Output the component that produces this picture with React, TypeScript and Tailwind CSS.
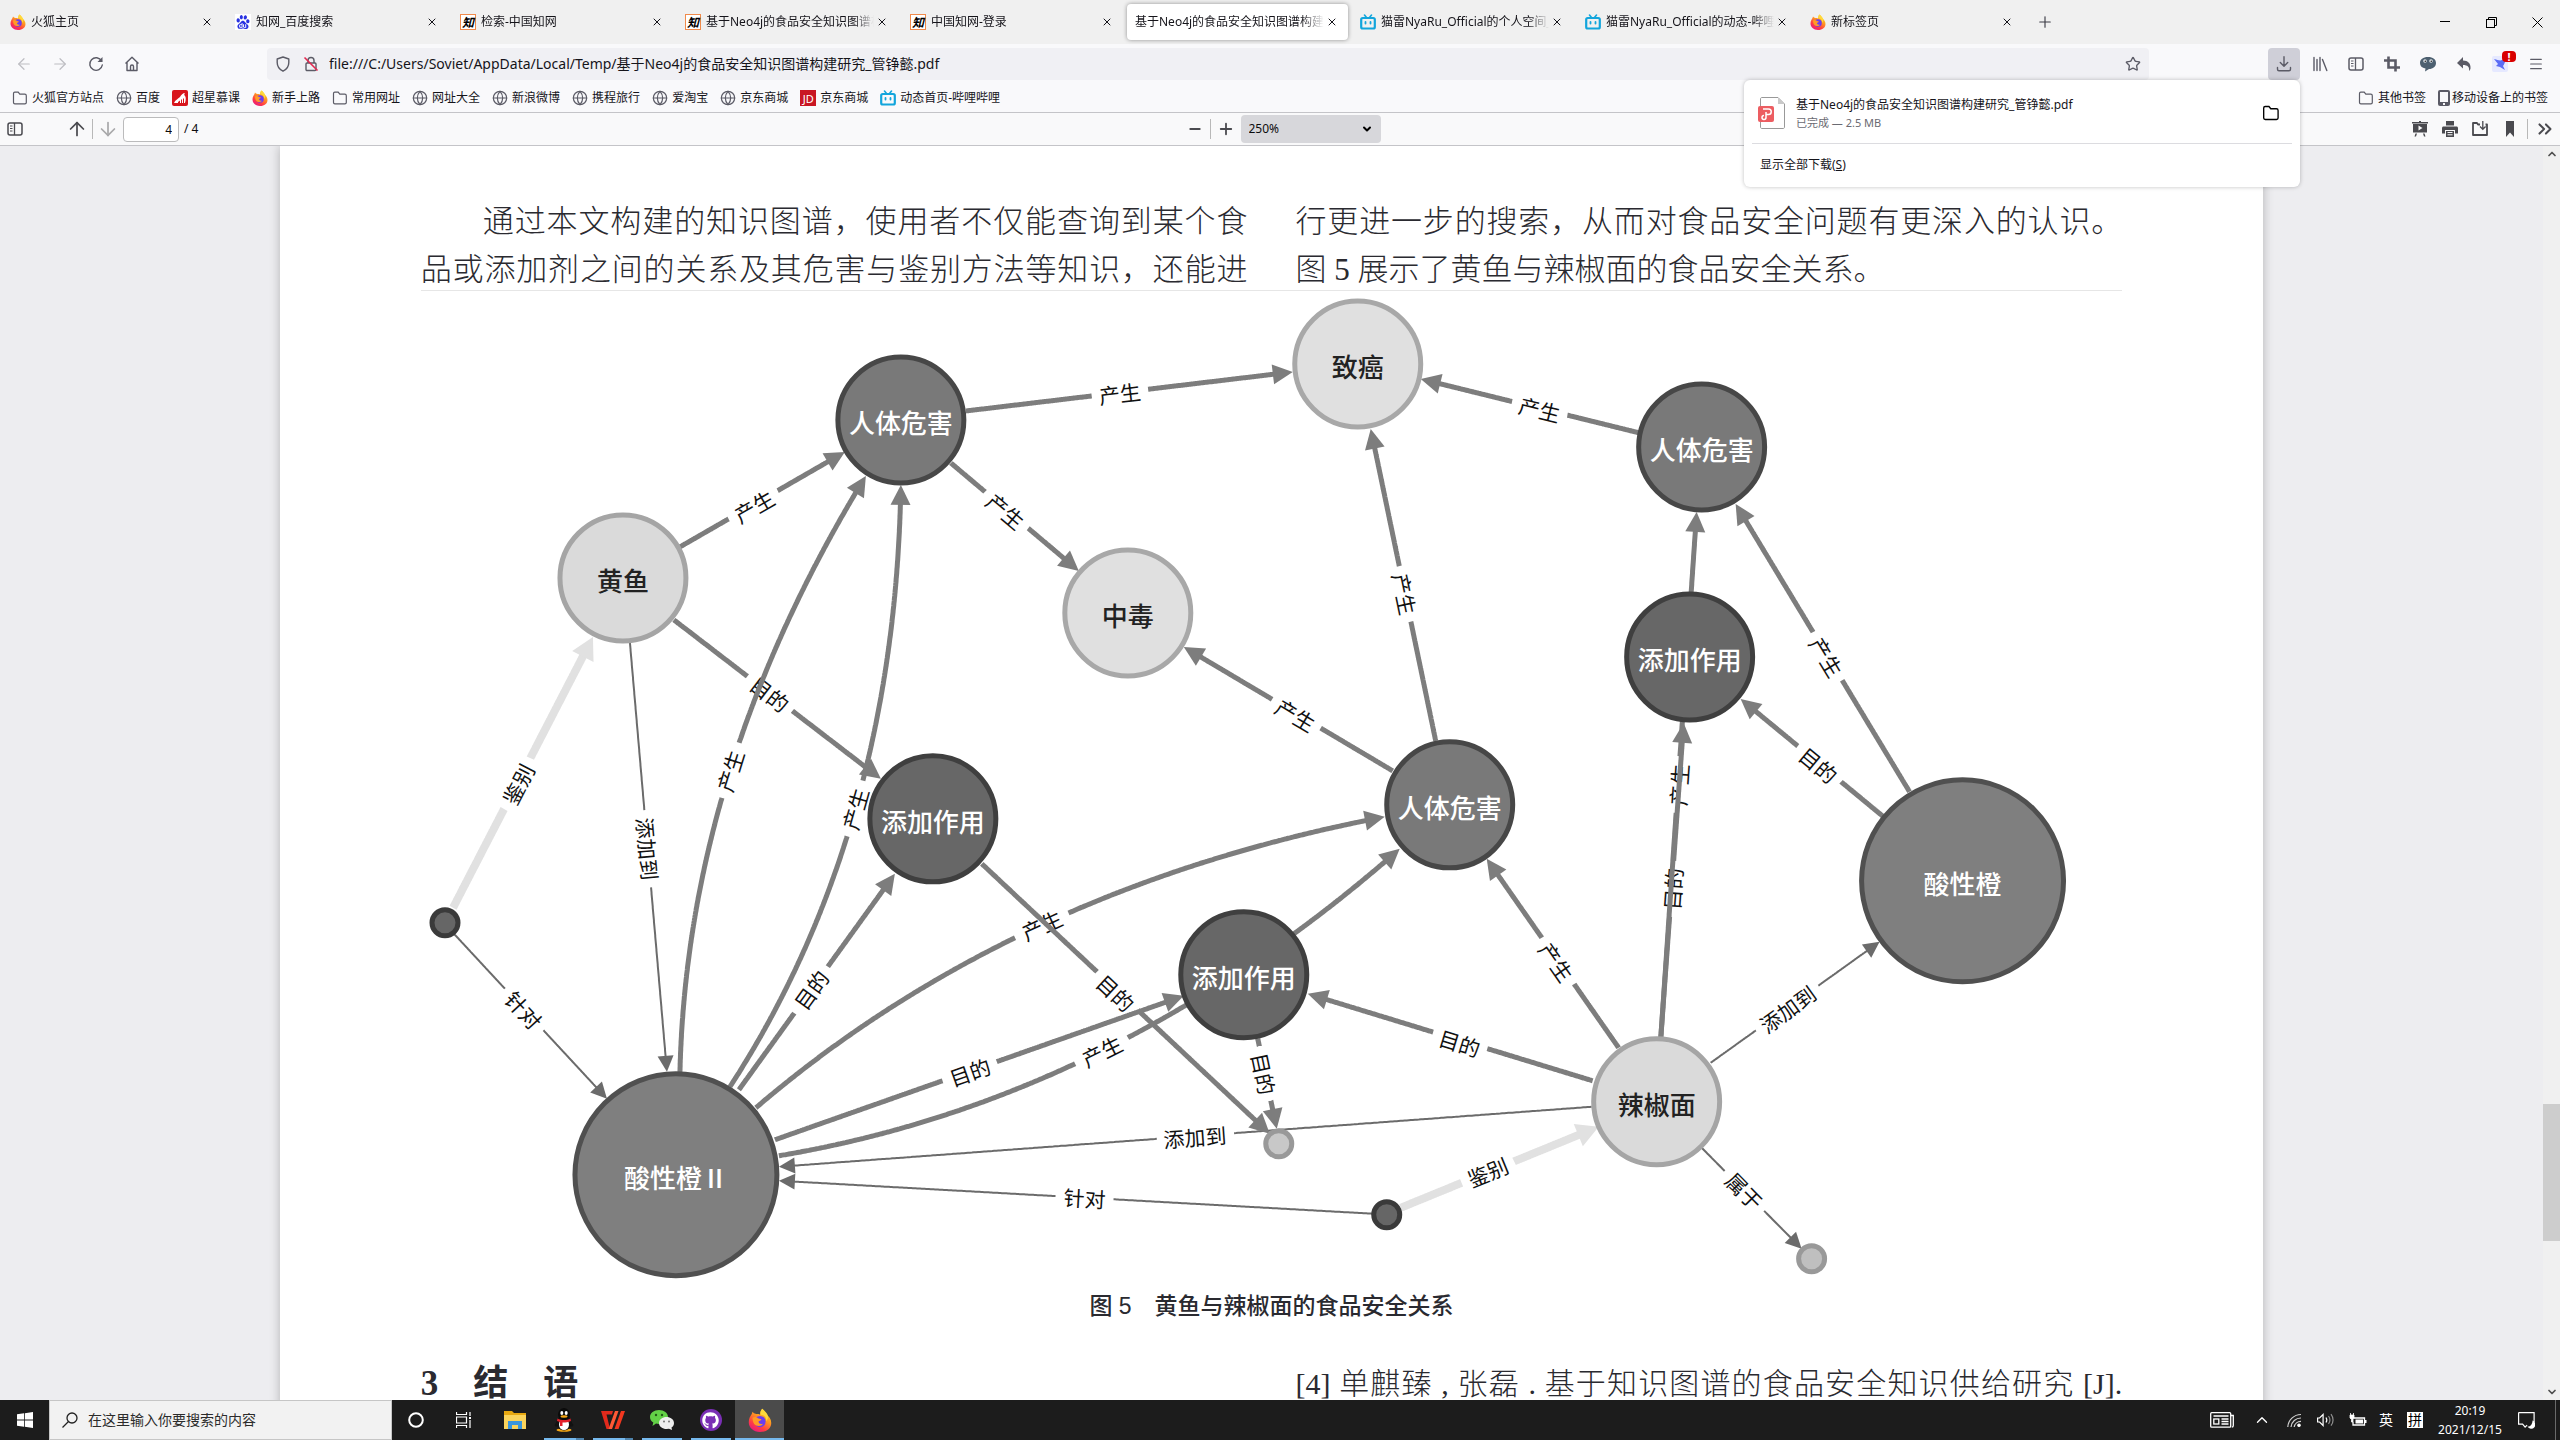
import type { ReactNode } from 'react';
import {
  ArrowDown,
  ArrowUp,
  ArrowLeft,
  ArrowRight,
  ChevronDown,
  ChevronUp,
  ChevronsRight,
  Globe,
  Menu,
  Minus,
  Plus,
  Star,
  X,
} from 'lucide-react';
import { FaGithub } from 'react-icons/fa';
import { SiBaidu } from 'react-icons/si';

/* ---------- logos ---------- */

function FirefoxLogo({ className = 'size-4' }: { className?: string }) {
  return (
    <svg viewBox="0 0 32 32" className={className} aria-hidden="true">
      <defs>
        <linearGradient id="ff-body" x1="0.8" y1="0" x2="0.2" y2="1">
          <stop offset="0" stopColor="#ffe226" />
          <stop offset="0.4" stopColor="#ff9422" />
          <stop offset="0.72" stopColor="#ff3b45" />
          <stop offset="1" stopColor="#e31587" />
        </linearGradient>
      </defs>
      <path
        d="M19 1c4 3 5 6 6 8 3 2 6 6 6 11 0 7-6 12-15 12S1 26 1 19c0-5 2-8 4-11l1-3 2 2 3 1c2 0 4 0 5 1 0-3 1-6 3-8z"
        fill="url(#ff-body)"
      />
      <circle cx="16" cy="18" r="7.5" fill="#6a3df0" />
      <path d="M6 13c3-2 6-1 8 1l4 1c-1 2-3 2-4 3 0 3 3 4 6 3-2 4-9 4-12 0-1-2-2-5-2-8z" fill="#ff9a26" />
      <path d="M17 9c5 0 8 4 7 9 4-4 3-9 0-12l-5-5c-2 2-3 5-2 8z" fill="#ffd93b" />
    </svg>
  );
}

function BiliLogo() {
  return (
    <svg viewBox="0 0 16 16" className="size-4" aria-hidden="true" fill="none" stroke="#12a5dc" strokeLinecap="round">
      <path d="M4.5 1l2 2.5M11.500 1l-2 2.500" strokeWidth="1.6" />
      <rect x="1.200" y="4" width="13.600" height="10.500" rx="1.500" strokeWidth="2.200" />
      <path d="M5.500 8v1.500M10.500 8v1.500" strokeWidth="1.800" />
    </svg>
  );
}

function CnkiLogo() {
  return (
    <span className="flex size-4 items-center justify-center border border-[#f08a4b] bg-white font-['Noto_Sans_CJK_SC',sans-serif] text-xs leading-none font-bold italic text-black">
      知
    </span>
  );
}

function BaiduLogo() {
  return (
    <span className="flex size-4 items-center justify-center bg-white">
      <SiBaidu className="size-3.5 text-[#2932e1]" />
    </span>
  );
}

function JdLogo() {
  return (
    <span className="flex size-4 items-center justify-center bg-[#c91623] text-[11px] leading-none text-white">JD</span>
  );
}

function ChaoxingLogo() {
  return (
    <svg viewBox="0 0 16 16" className="size-4" aria-hidden="true">
      <rect width="16" height="16" rx="2" fill="#d8151c" />
      <path d="M2 13c1-3 4-4 6-6 1-2 3-4 5-4-1 1-1 2 0 3s1 4 0 7h-1V9l-1-1v5h-1V9L9 10v3H8v-2.500L6 12v1z" fill="#fff" />
    </svg>
  );
}

/* ---------- outline icons ---------- */

function FolderIcon({ className = 'size-4 text-[#5b5b66]' }: { className?: string }) {
  return (
    <svg viewBox="0 0 16 16" className={className} fill="none" stroke="currentColor" strokeWidth="1.200" aria-hidden="true">
      <path d="M1.500 3.500c0-.8.500-1.300 1.300-1.300h3.400l1.600 2h5c.9 0 1.500.6 1.500 1.500v6.800c0 .8-.6 1.300-1.400 1.300H2.900c-.8 0-1.400-.5-1.400-1.300z" />
    </svg>
  );
}

function SidebarIcon({ className = 'size-4' }: { className?: string }) {
  return (
    <svg viewBox="0 0 16 16" className={className} fill="none" stroke="currentColor" aria-hidden="true">
      <rect x="1" y="2" width="14" height="12" rx="2" strokeWidth="1.500" />
      <path d="M7.500 2v12" strokeWidth="1.300" />
      <path d="M3 5h2.500M3 7.500h2.500M3 10h2.500" strokeWidth="1" />
    </svg>
  );
}

function PhoneIcon() {
  return (
    <svg viewBox="0 0 12 16" className="h-4 w-3" aria-hidden="true">
      <rect width="12" height="16" rx="2" fill="#5b5b66" />
      <rect x="2" y="2" width="8" height="10" fill="#f9f9fb" />
      <rect x="5" y="13" width="2" height="2" fill="#f9f9fb" />
    </svg>
  );
}

const strokeIcon = 'size-4 fill-none stroke-current';

/* ---------- browser chrome ---------- */

const tabs: { title: string; icon?: ReactNode; active?: boolean }[] = [
  { title: '火狐主页', icon: <FirefoxLogo /> },
  { title: '知网_百度搜索', icon: <BaiduLogo /> },
  { title: '检索-中国知网', icon: <CnkiLogo /> },
  { title: '基于Neo4j的食品安全知识图谱构建研究', icon: <CnkiLogo /> },
  { title: '中国知网-登录', icon: <CnkiLogo /> },
  { title: '基于Neo4j的食品安全知识图谱构建研究', active: true },
  { title: '猫雷NyaRu_Official的个人空间_哔哩哔哩', icon: <BiliLogo /> },
  { title: '猫雷NyaRu_Official的动态-哔哩哔哩', icon: <BiliLogo /> },
  { title: '新标签页', icon: <FirefoxLogo /> },
];

function TabStrip() {
  return (
    <header className="flex h-11 shrink-0 bg-[#f0f0f0]">
      <div role="tablist" className="flex min-w-0 flex-1">
        {tabs.map((tab, i) => (
          <div key={i} className="max-w-[225px] min-w-0 flex-1 px-0.5 py-1">
            <div
              className={
                tab.active
                  ? 'flex h-full items-center rounded bg-white pr-2 pl-2 shadow-[0_0_4px_rgba(0,0,0,0.4)]'
                  : 'flex h-full items-center pr-2 pl-2'
              }
            >
              <button
                type="button"
                role="tab"
                aria-selected={!!tab.active}
                className="flex min-w-0 flex-1 items-center gap-[5px] text-left text-xs whitespace-nowrap"
              >
                {tab.icon && <span className="shrink-0">{tab.icon}</span>}
                <span className="min-w-0 flex-1 overflow-hidden [mask-image:linear-gradient(to_right,black_88%,transparent)]">
                  {tab.title}
                </span>
              </button>
              <button type="button" aria-label="关闭标签页" className="flex w-4 shrink-0 justify-center">
                <X className="size-3" strokeWidth={2} />
              </button>
            </div>
          </div>
        ))}
        <button type="button" aria-label="新建标签页" className="flex w-10 items-center justify-center text-[#3a3a44]">
          <Plus className="size-[18px]" strokeWidth={1.5} />
        </button>
      </div>
      <div className="flex">
        <button type="button" aria-label="最小化" className="flex w-[46px] items-center justify-center">
          <svg viewBox="0 0 10 10" className="size-2.5 stroke-black"><path d="M0 4.500h10" /></svg>
        </button>
        <button type="button" aria-label="还原" className="flex w-[46px] items-center justify-center">
          <svg viewBox="0 0 11 11" className="size-[11px] fill-none stroke-black">
            <rect x=".5" y="2.500" width="8" height="8" />
            <path d="M2.500 2.500v-2h8v8h-2" />
          </svg>
        </button>
        <button type="button" aria-label="关闭" className="flex w-[46px] items-center justify-center">
          <svg viewBox="0 0 11 11" className="size-[11px] stroke-black"><path d="M.5.5l10 10M10.500.5l-10 10" /></svg>
        </button>
      </div>
    </header>
  );
}

function NavButton({ label, children, className = 'text-[#5b5b66]' }: { label: string; children: ReactNode; className?: string }) {
  return (
    <button type="button" aria-label={label} className={`flex h-8 w-8 shrink-0 items-center justify-center rounded ${className}`}>
      {children}
    </button>
  );
}

function NavBar() {
  return (
    <nav className="flex h-10 shrink-0 items-center gap-1 px-2">
      <NavButton label="后退" className="text-[#bdbdc2]"><ArrowLeft className="size-[18px]" strokeWidth={1.6} /></NavButton>
      <NavButton label="前进" className="text-[#bdbdc2]"><ArrowRight className="size-[18px]" strokeWidth={1.6} /></NavButton>
      <NavButton label="刷新">
        <svg viewBox="0 0 16 16" className={strokeIcon} strokeWidth="1.400">
          <path d="M13.600 5A6.300 6.300 0 1 0 14.300 9" strokeLinecap="round" />
          <path d="M14.500 1v5h-5z" fill="currentColor" stroke="none" />
        </svg>
      </NavButton>
      <NavButton label="主页">
        <svg viewBox="0 0 16 16" className={strokeIcon} strokeWidth="1.400" strokeLinejoin="round">
          <path d="M1.500 7.500L8 1.200l6.500 6.300M3 6.500v8h10v-8" />
          <path d="M6.500 14V10.500a1.500 1.500 0 0 1 3 0V14" />
        </svg>
      </NavButton>
      <div className="mx-[115px] flex h-8 min-w-0 flex-1 items-center rounded bg-[#f0f0f4] pr-2 pl-2">
        <svg viewBox="0 0 16 16" className="size-4 shrink-0 fill-none stroke-[#5b5b66]" strokeWidth="1.400">
          <path d="M8 1l5.800 2v3.500c0 4-2.300 7-5.800 8.700C4.500 13.500 2.200 10.500 2.200 6.500V3z" strokeLinejoin="round" />
        </svg>
        <svg viewBox="0 0 16 16" className="ml-3 size-4 shrink-0 fill-none" strokeWidth="1.400">
          <rect x="3" y="7" width="10" height="7.500" rx="1" stroke="#5b5b66" />
          <path d="M5 7V4.500a3 3 0 0 1 6 0V7" stroke="#5b5b66" />
          <path d="M1.500 1.500l13 13" stroke="#e22850" strokeWidth="1.600" />
        </svg>
        <input
          aria-label="地址"
          className="ml-2.5 min-w-0 flex-1 bg-transparent text-sm text-[#15141a] outline-none"
          defaultValue="file:///C:/Users/Soviet/AppData/Local/Temp/基于Neo4j的食品安全知识图谱构建研究_管铮懿.pdf"
        />
        <button type="button" aria-label="添加书签"><Star className="size-4 text-[#5b5b66]" strokeWidth={2} /></button>
      </div>
      <NavButton label="下载" className="bg-[#cfcfd8] text-[#5b5b66]">
        <svg viewBox="0 0 16 16" className={strokeIcon} strokeWidth="1.400" strokeLinecap="round" strokeLinejoin="round">
          <path d="M8 .8V10M4.300 6.500L8 10.200l3.700-3.700M1.500 11.500v1.800c0 .9.600 1.500 1.500 1.500h10c.9 0 1.500-.6 1.500-1.500v-1.800" />
        </svg>
      </NavButton>
      <NavButton label="我的足迹">
        <svg viewBox="0 0 16 16" className={strokeIcon} strokeWidth="1.400" strokeLinecap="round">
          <path d="M2 1.500v13M5 3.500v11M8 1.500v13M10.500 3.500l4.300 11" />
        </svg>
      </NavButton>
      <NavButton label="侧栏"><SidebarIcon /></NavButton>
      <NavButton label="截图">
        <svg viewBox="0 0 16 16" className={strokeIcon} strokeWidth="2.600">
          <path d="M4.500.5v11H16M0 4.500h11.500V15.500" />
        </svg>
      </NavButton>
      <NavButton label="扩展">
        <svg viewBox="0 0 18 16" className="h-4 w-[18px]">
          <path d="M9 1c5 0 8 2.500 8 6s-3 6-7 6l-4 2.500.500-3C3 12 1 10 1 7c0-3.500 3-6 8-6z" fill="#4d6070" />
          <circle cx="6" cy="5" r="1.800" fill="#dfe5ea" />
          <circle cx="12" cy="5" r="1.800" fill="#dfe5ea" />
          <circle cx="6.300" cy="5.200" r=".8" fill="#222" />
          <circle cx="12.300" cy="5.200" r=".8" fill="#222" />
        </svg>
      </NavButton>
      <NavButton label="撤销关闭">
        <svg viewBox="0 0 16 16" className="size-4 fill-current">
          <path d="M7 1v3.500c5 0 8 3 7.500 8-.2 1.200-.8 2-1.500 2.500.8-4-1.500-6-6-6v3.500L1 7z" />
        </svg>
      </NavButton>
      <NavButton label="迅雷扩展" className="relative">
        <svg viewBox="0 0 16 16" className="size-4">
          <rect width="16" height="16" rx="2" fill="#e6e9ff" />
          <path d="M2 3c4 1 6 2 8 1l4-1c-1 3-2 6-3 7l2 4-5-3-4-1 2-2z" fill="#5b6cf5" />
        </svg>
        <span className="absolute top-[3px] right-0 h-[11px] w-3.5 rounded-sm bg-[#d90000] text-[11px] leading-[11px] font-bold text-white">!</span>
      </NavButton>
      <NavButton label="菜单"><Menu className="size-4" strokeWidth={1.8} /></NavButton>
    </nav>
  );
}

const globe = <Globe className="size-4 text-[#5b5b66]" strokeWidth={1.8} />;
const bookmarks: { label: string; icon: ReactNode }[] = [
  { label: '火狐官方站点', icon: <FolderIcon /> },
  { label: '百度', icon: globe },
  { label: '超星慕课', icon: <ChaoxingLogo /> },
  { label: '新手上路', icon: <FirefoxLogo /> },
  { label: '常用网址', icon: <FolderIcon /> },
  { label: '网址大全', icon: globe },
  { label: '新浪微博', icon: globe },
  { label: '携程旅行', icon: globe },
  { label: '爱淘宝', icon: globe },
  { label: '京东商城', icon: globe },
  { label: '京东商城', icon: <JdLogo /> },
  { label: '动态首页-哔哩哔哩', icon: <BiliLogo /> },
];

function BookmarkBar() {
  return (
    <div className="flex h-7 shrink-0 items-center gap-3 px-3 text-xs whitespace-nowrap">
      {bookmarks.map((b, i) => (
        <a key={i} href="#" className="flex items-center gap-1">
          {b.icon}
          {b.label}
        </a>
      ))}
      <a href="#" className="ml-auto flex items-center gap-1"><FolderIcon />其他书签</a>
      <a href="#" className="flex items-center gap-0.5"><PhoneIcon />移动设备上的书签</a>
    </div>
  );
}

/* ---------- PDF viewer toolbar ---------- */

function ToolButton({ label, children, className = '' }: { label: string; children: ReactNode; className?: string }) {
  return (
    <button type="button" aria-label={label} className={`flex h-full w-[30px] items-center justify-center ${className}`}>
      {children}
    </button>
  );
}

function PdfToolbar() {
  return (
    <div className="grid h-[34px] shrink-0 grid-cols-[1fr_auto_1fr] items-center border-y border-[#c4c4c8] bg-[#f9f9fa] text-xs text-[#4a4a4f]">
      <div className="flex h-full items-center">
        <ToolButton label="切换侧栏"><SidebarIcon /></ToolButton>
        <span className="w-8" />
        <ToolButton label="上一页"><ArrowUp className="size-[22px]" strokeWidth={1.9} /></ToolButton>
        <span className="h-5 w-px bg-[#b8b8b8]" />
        <ToolButton label="下一页" className="text-[#a9a9ab]"><ArrowDown className="size-[22px]" strokeWidth={1.9} /></ToolButton>
        <input
          aria-label="页码"
          defaultValue="4"
          className="h-[25px] w-14 rounded-sm border border-[#bbbbbc] bg-white pr-1.5 text-right text-[#0c0c0d]"
        />
        <span className="ml-[5px] text-[#0c0c0d]">/ 4</span>
      </div>
      <div className="flex h-full items-center">
        <ToolButton label="缩小"><Minus className="size-4" strokeWidth={3} /></ToolButton>
        <span className="h-5 w-px bg-[#b8b8b8]" />
        <ToolButton label="放大"><Plus className="size-[18px]" strokeWidth={2.4} /></ToolButton>
        <div className="relative">
          <select aria-label="缩放" className="h-7 w-[140px] appearance-none rounded-sm bg-[#d7d7db] pl-2 text-[#0c0c0d]">
            <option>250%</option>
          </select>
          <ChevronDown className="pointer-events-none absolute top-2 right-2 size-3 text-black" strokeWidth={4} />
        </div>
      </div>
      <div className="flex h-full items-center justify-end">
        <ToolButton label="演示模式">
          <svg viewBox="0 0 16 16" className="size-4 fill-current">
            <path d="M0 1h7V0h2v1h7v1.500H0zM1 3h14v8.500H1zM3.500 12.500H5l-1 3H2.500zM11 12.500h1.500l1 3H12z" />
            <path d="M6.500 4.500v5l4-2.500z" fill="#f9f9fa" />
          </svg>
        </ToolButton>
        <ToolButton label="打印">
          <svg viewBox="0 0 16 16" className="size-4 fill-current">
            <path d="M4 0h8v4.500H4zM1.500 5.500h13c.8 0 1.500.7 1.500 1.500v5.500h-3V9H3v3.500H0V7c0-.8.7-1.500 1.500-1.500z" />
            <path d="M4 10h8v6H4z" />
            <path d="M5.500 11.500h5M5.500 13.800h5" stroke="#f9f9fa" />
          </svg>
        </ToolButton>
        <ToolButton label="下载">
          <svg viewBox="0 0 16 16" className={strokeIcon} strokeWidth="1.800">
            <path d="M8 3.500H6L5 2H1v12h14V3.500h-1.500" strokeLinejoin="round" />
            <path d="M10.800 0v8M8 5.500l2.800 2.800 2.800-2.800" strokeWidth="1.300" />
          </svg>
        </ToolButton>
        <ToolButton label="当前视图"><svg viewBox="0 0 16 16" className="size-4 fill-current"><path d="M4 0h8v16l-4-4.500L4 16z" /></svg></ToolButton>
        <span className="mx-0.5 h-5 w-px bg-[#b8b8b8]" />
        <ToolButton label="工具"><ChevronsRight className="size-[22px]" strokeWidth={2.2} /></ToolButton>
      </div>
    </div>
  );
}

function DownloadsPopup() {
  return (
    <section
      aria-label="下载"
      className="absolute top-20 right-[260px] w-[556px] rounded-md bg-white px-2 py-3 shadow-[0_0_4px_rgba(0,0,0,0.25)]"
    >
      <div className="flex h-[52px] items-center border-b border-[#dcdce0] pr-3 pb-2.5 pl-1.5">
        <svg viewBox="0 0 28 32" className="h-8 w-7 shrink-0" aria-hidden="true">
          <path d="M2.500 2c0-1 .5-1.500 1.500-1.500h16l6.500 6.500v23c0 1-.5 1.500-1.500 1.500H4c-1 0-1.500-.5-1.500-1.500z" fill="#fff" stroke="#999" />
          <path d="M20 .5V7h6.500z" fill="#c9c9c9" />
          <rect y="9" width="16" height="16" rx="2" fill="#ec5d61" />
          <path d="M5 12h5.500a2.700 2.700 0 0 1 0 5.500H8M8 15v5.500a2 2 0 1 1-2-2" fill="none" stroke="#fff" strokeWidth="1.500" />
        </svg>
        <div className="ml-2.5 min-w-0 flex-1">
          <p className="text-xs leading-5">基于Neo4j的食品安全知识图谱构建研究_管铮懿.pdf</p>
          <p className="text-[11px] leading-4 text-[#6a6a72]">已完成 — 2.5 MB</p>
        </div>
        <button type="button" aria-label="打开文件夹"><FolderIcon className="size-[18px] text-black" /></button>
      </div>
      <button type="button" className="mt-2.5 ml-2 block text-xs leading-[21px]">
        显示全部下载(<u>S</u>)
      </button>
    </section>
  );
}

/* ---------- knowledge graph figure ---------- */

type Pt = [number, number];
interface GraphNode {
  at: Pt;
  r: number;
  fill: string;
  stroke: string;
  label?: string;
  ink?: string;
}

const harm = { r: 63, fill: '#797979', stroke: '#474747', label: '人体危害', ink: '#fff' };
const use = { r: 63, fill: '#676767', stroke: '#3f3f3f', label: '添加作用', ink: '#fff' };
const food = { r: 63, fill: '#dadada', stroke: '#a5a5a5', ink: '#222' };
const effect = { r: 63, fill: '#e0e0e0', stroke: '#a8a8a8', ink: '#222' };
const dye = { r: 101, fill: '#7f7f7f', stroke: '#505050', ink: '#fff' };

const nodes: GraphNode[] = [
  { at: [901, 420], ...harm },
  { at: [1702, 447], ...harm },
  { at: [1450, 805], ...harm },
  { at: [933, 819], ...use },
  { at: [1244, 975], ...use },
  { at: [1690, 657], ...use },
  { at: [623, 578], ...food, label: '黄鱼' },
  { at: [1657, 1102], ...food, label: '辣椒面' },
  { at: [1358, 364], ...effect, label: '致癌' },
  { at: [1128, 613], ...effect, label: '中毒' },
  { at: [1963, 881], ...dye, label: '酸性橙' },
  { at: [676, 1175], ...dye, label: '酸性橙Ⅱ' },
  { at: [445, 923], r: 13, fill: '#666', stroke: '#3a3a3a' },
  { at: [1387, 1215], r: 13, fill: '#666', stroke: '#3a3a3a' },
  { at: [1279, 1144], r: 13, fill: '#c8c8c8', stroke: '#999' },
  { at: [1812, 1259], r: 13, fill: '#bfbfbf', stroke: '#999' },
];

interface Edge {
  from: Pt;
  to: Pt;
  via?: Pt;
  label: string;
  at: Pt;
  kind?: 'thin' | 'pale';
}

const edges: Edge[] = [
  { from: [966, 411], to: [1293, 372], label: '产生', at: [1120, 393] },
  { from: [680, 547], to: [845, 452], label: '产生', at: [754, 506] },
  { from: [951, 463], to: [1079, 571], label: '产生', at: [1006, 511] },
  { from: [1640, 433], to: [1421, 379], label: '产生', at: [1540, 409] },
  { from: [1436, 741], to: [1371, 429], label: '产生', at: [1405, 594] },
  { from: [1393, 771], to: [1184, 647], label: '产生', at: [1296, 715] },
  { from: [1661, 1040], to: [1697, 512], label: '产生', at: [1679, 785] },
  { from: [1661, 1040], to: [1684, 723], label: '目的', at: [1673, 889] },
  { from: [1910, 792], to: [1736, 504], label: '产生', at: [1827, 657] },
  { from: [1884, 817], to: [1741, 699], label: '目的', at: [1819, 765] },
  { from: [1619, 1048], to: [1487, 859], label: '产生', at: [1557, 962] },
  { from: [1593, 1081], to: [1308, 994], label: '目的', at: [1460, 1043] },
  { from: [1711, 1063], to: [1880, 942], label: '添加到', at: [1788, 1009], kind: 'thin' },
  { from: [1592, 1107], to: [779, 1167], label: '添加到', at: [1195, 1137], kind: 'thin' },
  { from: [1702, 1148], to: [1802, 1249], label: '属于', at: [1745, 1191], kind: 'thin' },
  { from: [1401, 1208], to: [1599, 1127], label: '鉴别', at: [1488, 1172], kind: 'pale' },
  { from: [1374, 1214], to: [779, 1181], label: '针对', at: [1085, 1198], kind: 'thin' },
  { from: [982, 864], to: [1270, 1134], label: '目的', at: [1116, 993] },
  { from: [1258, 1039], to: [1277, 1129], label: '目的', at: [1264, 1074] },
  { from: [674, 620], to: [881, 779], label: '目的', at: [770, 694] },
  { from: [630, 643], to: [667, 1072], label: '添加到', at: [648, 849], kind: 'thin' },
  { from: [453, 908], to: [593, 637], label: '鉴别', at: [518, 784], kind: 'pale' },
  { from: [454, 934], to: [607, 1099], label: '针对', at: [524, 1010], kind: 'thin' },
  { from: [739, 1090], to: [895, 874], label: '目的', at: [811, 990] },
  { from: [775, 1140], to: [1184, 996], label: '目的', at: [970, 1072] },
  { from: [680, 1073], via: [687, 768], to: [866, 476], label: '产生', at: [730, 771] },
  { from: [730, 1087], via: [895, 833], to: [901, 485], label: '产生', at: [855, 809] },
  { from: [756, 1108], via: [1013, 888], to: [1385, 817], label: '产生', at: [1042, 925] },
  { from: [779, 1156], via: [1114, 1100], to: [1400, 849], label: '产生', at: [1102, 1051] },
];

const edgeStyle = {
  normal: { color: '#7d7d7d', width: 5, head: 20, half: 10 },
  thin: { color: '#6b6b6b', width: 2, head: 16, half: 8 },
  pale: { color: '#e1e1e1', width: 8, head: 22, half: 12 },
};

function edgeGeometry(e: Edge) {
  const style = edgeStyle[e.kind ?? 'normal'];
  const via: Pt = e.via ?? [(e.from[0] + e.to[0]) / 2, (e.from[1] + e.to[1]) / 2];
  const gap = e.label.length * 10 + 8;
  const end = Math.atan2(e.to[1] - via[1], e.to[0] - via[0]);
  let d = '';
  let pen = false;
  let nearest = Infinity;
  let labelAngle = 0;
  const steps = 400;
  for (let i = 0; i <= steps; i++) {
    const t = i / steps;
    const u = 1 - t;
    const x = u * u * e.from[0] + 2 * u * t * via[0] + t * t * e.to[0];
    const y = u * u * e.from[1] + 2 * u * t * via[1] + t * t * e.to[1];
    const toLabel = Math.hypot(x - e.at[0], y - e.at[1]);
    if (toLabel < nearest) {
      nearest = toLabel;
      const dx = u * (via[0] - e.from[0]) + t * (e.to[0] - via[0]);
      const dy = u * (via[1] - e.from[1]) + t * (e.to[1] - via[1]);
      labelAngle = (Math.atan2(dy, dx) * 180) / Math.PI;
    }
    const hidden = toLabel < gap || Math.hypot(x - e.to[0], y - e.to[1]) < style.head - 3;
    if (hidden) {
      pen = false;
      continue;
    }
    d += `${pen ? 'L' : 'M'}${x.toFixed(1)} ${y.toFixed(1)}`;
    pen = true;
  }
  if (labelAngle > 90) labelAngle -= 180;
  if (labelAngle < -90) labelAngle += 180;
  const bx = e.to[0] - Math.cos(end) * style.head;
  const by = e.to[1] - Math.sin(end) * style.head;
  const nx = -Math.sin(end) * style.half;
  const ny = Math.cos(end) * style.half;
  const head = `${e.to[0]},${e.to[1]} ${bx + nx},${by + ny} ${bx - nx},${by - ny}`;
  return { style, d, head, labelAngle };
}

const drawnEdges = edges.map((e) => ({ ...e, ...edgeGeometry(e) }));

function KnowledgeGraph() {
  return (
    <svg
      viewBox="421 291 1702 990"
      className="block w-full font-['Noto_Sans_CJK_SC',sans-serif]"
      role="img"
      aria-label="黄鱼与辣椒面的食品安全关系"
    >
      {drawnEdges.map((e, i) => (
        <text
          key={i}
          x={e.at[0]}
          y={e.at[1]}
          fontSize="21"
          fill="#111"
          textAnchor="middle"
          dominantBaseline="central"
          transform={`rotate(${e.labelAngle} ${e.at[0]} ${e.at[1]})`}
        >
          {e.label}
        </text>
      ))}
      {drawnEdges.map((e, i) => (
        <g key={i}>
          <path d={e.d} fill="none" stroke={e.style.color} strokeWidth={e.style.width} />
          <polygon points={e.head} fill={e.style.color} />
        </g>
      ))}
      {nodes.map((n, i) => (
        <g key={i}>
          <circle cx={n.at[0]} cy={n.at[1]} r={n.r} fill={n.fill} stroke={n.stroke} strokeWidth="5" />
          {n.label && (
            <text
              x={n.at[0]}
              y={n.at[1] + 2}
              fontSize="26"
              fontWeight="500"
              fill={n.ink}
              textAnchor="middle"
              dominantBaseline="central"
            >
              {n.label}
            </text>
          )}
        </g>
      ))}
    </svg>
  );
}

/* ---------- document ---------- */

function PdfPage() {
  return (
    <article className="mx-auto w-[78%] overflow-hidden bg-white px-[141px] font-['Liberation_Serif','Noto_Sans_CJK_SC',serif] text-[#2a2a30] shadow-[0_0_10px_rgba(0,0,0,0.25)]">
      <div className="grid h-[145px] grid-cols-2 gap-12 border-b border-[#e6e6e6] pt-[52px] text-[31px] leading-[48px] font-light">
        <p className="text-justify indent-[2em] [text-align-last:justify]">
          通过本文构建的知识图谱，使用者不仅能查询到某个食品或添加剂之间的关系及其危害与鉴别方法等知识，还能进
        </p>
        <p className="text-justify">
          行更进一步的搜索，从而对食品安全问题有更深入的认识。图 5 展示了黄鱼与辣椒面的食品安全关系。
        </p>
      </div>
      <figure>
        <KnowledgeGraph />
        <figcaption className="text-center font-['Liberation_Sans','Noto_Sans_CJK_SC',sans-serif] text-[23px] leading-[50px] font-medium">
          图 5　黄鱼与辣椒面的食品安全关系
        </figcaption>
      </figure>
      <div className="mt-7 grid grid-cols-2 gap-12 leading-[50px]">
        <h2 className="text-[35px] font-bold">3　结　语</h2>
        <p className="text-[30px] font-light whitespace-nowrap [text-align-last:justify]">
          [4] 单麒臻 , 张磊 . 基于知识图谱的食品安全知识供给研究 [J].
        </p>
      </div>
    </article>
  );
}

function ScrollBar() {
  return (
    <div className="flex w-[17px] shrink-0 flex-col items-center bg-[#f0f0f0] py-0.5 text-[#505050]">
      <ChevronUp className="size-3" strokeWidth={3.5} />
      <div className="flex w-full flex-1 flex-col">
        <span className="flex-[944]" />
        <span className="flex-[137] bg-[#cdcdcd]" />
        <span className="flex-[145]" />
      </div>
      <ChevronDown className="size-3" strokeWidth={3.5} />
    </div>
  );
}

/* ---------- taskbar ---------- */

function TaskButton({ label, children, state = 'idle' }: { label: string; children: ReactNode; state?: 'idle' | 'open' | 'group' | 'active' }) {
  return (
    <button
      type="button"
      aria-label={label}
      className={`flex h-full w-[49px] flex-col items-center ${state === 'active' ? 'bg-[#4b4b4b]' : ''}`}
    >
      <span className="flex flex-1 items-center pt-0.5">{children}</span>
      {state === 'idle' && <span className="h-0.5" />}
      {state === 'open' && <span className="h-0.5 w-10 bg-[#76b9ed]" />}
      {state === 'active' && <span className="h-0.5 w-full bg-[#76b9ed]" />}
      {state === 'group' && (
        <span className="flex h-0.5 w-10 bg-[#76b9ed]"><span className="ml-auto w-2 bg-[#4f84ad]" /></span>
      )}
    </button>
  );
}

function TaskBar() {
  return (
    <footer className="flex h-10 shrink-0 items-center bg-[#1c1c1c] text-white">
      <button type="button" aria-label="开始" className="flex w-[49px] justify-center">
        <svg viewBox="0 0 16 16" className="size-4 fill-white"><path d="M0 2.300L7 1.300V7.600H0zM7.800 1.200L16 0v7.600H7.800zM0 8.400h7v6.300l-7-1zM7.800 8.400H16V16l-8.200-1.200z" /></svg>
      </button>
      <label className="flex h-full w-[343px] items-center gap-2.5 border border-[#c6c6c6] bg-[#f2f2f2] pl-3 text-[#2b2b2b]">
        <svg viewBox="0 0 16 16" className="size-4 fill-none stroke-[#222]" strokeWidth="1.300">
          <circle cx="10" cy="6" r="5" /><path d="M6.500 9.500L.5 15.500" />
        </svg>
        <input
          aria-label="搜索"
          placeholder="在这里输入你要搜索的内容"
          className="min-w-0 flex-1 bg-transparent text-sm outline-none placeholder:text-[#2b2b2b]"
        />
      </label>
      <button type="button" aria-label="Cortana" className="flex w-12 justify-center">
        <svg viewBox="0 0 16 16" className="size-4 fill-none stroke-white" strokeWidth="2"><circle cx="8" cy="8" r="6.800" /></svg>
      </button>
      <button type="button" aria-label="任务视图" className="flex w-12 justify-center">
        <svg viewBox="0 0 16 16" className="size-4 fill-none stroke-white" strokeWidth="1.200">
          <path d="M.5 0v2.500h10V0M.5 16v-2.500h10V16M.5 5h10v6H.5zM14 0v4M14 8v8" /><path d="M13 6h2" strokeWidth="2" />
        </svg>
      </button>
      <div className="ml-0.5 flex h-full">
        <TaskButton label="文件资源管理器">
          <svg viewBox="0 0 22 18" className="h-[18px] w-[22px]">
            <path d="M0 0h8l2 2h12v15H0z" fill="#e8a810" />
            <path d="M0 4h22v14H0z" fill="#fbd45c" />
            <path d="M4 18v-8h14v8h-4v-4H8v4z" fill="#3a96dd" />
          </svg>
        </TaskButton>
        <TaskButton label="QQ" state="group">
          <svg viewBox="0 0 20 24" className="h-6 w-5">
            <ellipse cx="10" cy="22" rx="7.500" ry="1.800" fill="#f5a614" />
            <ellipse cx="10" cy="15" rx="7.500" ry="7.500" fill="#111" />
            <path d="M4 12l-3.500 5 1.500 2 3-3zM16 12l3.500 5-1.500 2-3-3z" fill="#111" />
            <ellipse cx="10" cy="16.500" rx="5" ry="5.500" fill="#fff" />
            <ellipse cx="10" cy="6.500" rx="6" ry="6.500" fill="#0b0b0b" />
            <ellipse cx="7.800" cy="5" rx="1.500" ry="2" fill="#fff" />
            <ellipse cx="12.200" cy="5" rx="1.500" ry="2" fill="#fff" />
            <ellipse cx="10" cy="8.500" rx="3.500" ry="1.200" fill="#f5a614" />
            <path d="M3.500 10.500c4 2 9 2 13 0l.5 2.500c-3 1.300-6 1.600-8.500 1.500V18H6v-4l-3-1z" fill="#e3202b" />
          </svg>
        </TaskButton>
        <TaskButton label="WPS" state="group">
          <svg viewBox="0 0 24 18" className="h-[18px] w-6">
            <path d="M0 0h12l-1 3.500H5.500L9 18H5.500z" fill="#e02a1c" />
            <path d="M7.500 18L14 0h3.500L11 18z" fill="#ff5a36" />
            <path d="M13.500 18L20 0h4l-6.500 18z" fill="#f2371f" />
          </svg>
        </TaskButton>
        <TaskButton label="微信" state="open">
          <svg viewBox="0 0 24 20" className="h-5 w-6">
            <path d="M9 0c5 0 9 3 9 7s-4 7-9 7l-3-.5L2.500 16l.8-3.500C1.300 11.300 0 9.500 0 7c0-4 4-7 9-7z" fill="#63d147" />
            <circle cx="6" cy="5" r="1.200" fill="#245c18" /><circle cx="12" cy="5" r="1.200" fill="#245c18" />
            <path d="M16.500 7c4 0 7.500 2.500 7.500 6 0 2-1 3.500-2.500 4.500L22 20l-3-1.300-2.500.3C12.500 19 9 16.500 9 13s3.500-6 7.500-6z" fill="#efefef" />
            <circle cx="14" cy="11.500" r="1" fill="#777" /><circle cx="19" cy="11.500" r="1" fill="#777" />
          </svg>
        </TaskButton>
        <TaskButton label="GitHub Desktop" state="open">
          <span className="flex size-[22px] items-center justify-center rounded-full bg-[#7a2fb5]"><FaGithub className="size-[17px]" /></span>
        </TaskButton>
        <TaskButton label="Firefox" state="active"><FirefoxLogo className="size-6" /></TaskButton>
      </div>

      <div className="ml-auto flex h-full items-center">
        <button type="button" aria-label="资讯" className="flex w-12 justify-center">
          <svg viewBox="0 0 24 16" className="h-4 w-6 fill-none stroke-white" strokeWidth="1.300">
            <rect x=".7" y=".7" width="20" height="14.500" rx="1" /><path d="M20.700 3.500h2.600v10c0 1-.6 1.700-1.500 1.700" />
            <path d="M3.500 4h15M11.500 7h7M11.500 9.500h7M11.500 12h7" /><rect x="3.800" y="7" width="5" height="5" />
          </svg>
        </button>
        <button type="button" aria-label="显示隐藏的图标" className="flex w-8 justify-center"><ChevronUp className="size-[18px]" strokeWidth={1.8} /></button>
        <button type="button" aria-label="网络" className="flex w-8 justify-center">
          <svg viewBox="0 0 14 14" className="size-3.5 fill-none stroke-white" strokeWidth="1.200">
            <path d="M.8 14A13.200 13.200 0 0 1 14 1.500M4 14A10 10 0 0 1 14 5M7.200 14A6.800 6.800 0 0 1 14 8.300" opacity=".8" /><circle cx="12" cy="12.200" r="1.200" fill="#fff" />
          </svg>
        </button>
        <button type="button" aria-label="音量" className="flex w-8 justify-center">
          <svg viewBox="0 0 18 14" className="h-3.5 w-[18px] fill-none stroke-white" strokeWidth="1.200">
            <path d="M.6 5v4h2l3.500 3.500v-11L2.600 5z" /><path d="M9 4.500c1 1.500 1 3.500 0 5" /><path d="M11.500 3c1.800 2.500 1.800 5.500 0 8M14 1.200c2.500 3.500 2.500 8 0 11.500" opacity=".5" />
          </svg>
        </button>
        <button type="button" aria-label="电源" className="flex w-8 justify-center">
          <svg viewBox="0 0 18 14" className="h-3.5 w-[18px]">
            <path d="M5 5h10.500v7H4V9" fill="none" stroke="#fff" strokeWidth="1.300" /><path d="M6.500 6.500h7.500v4H6.500z" fill="#fff" /><path d="M16 7h1.500v3H16z" fill="#fff" />
            <path d="M1 2h4v3L4 6.500V9H2.500V6.500L1 5zM1.500 0v2M4.500 0v2" fill="#fff" stroke="#fff" strokeWidth=".8" />
          </svg>
        </button>
        <button type="button" className="w-6 text-sm">英</button>
        <button type="button" className="mx-[9px] flex size-4 items-center justify-center bg-white text-sm leading-none text-black">拼</button>
        <button type="button" className="w-[76px] text-center text-xs leading-[19px]">
          <time>20:19<br />2021/12/15</time>
        </button>
        <button type="button" aria-label="通知" className="flex w-9 justify-center">
          <svg viewBox="0 0 17 17" className="size-[17px]">
            <path d="M.6.6h15.500v9.500M.6.6v11.500h4l2.500 3 2-2" fill="none" stroke="#fff" strokeWidth="1.200" />
            <path d="M14.500 8.500a4.200 4.200 0 1 1-5 6c3 .5 5-2.500 5-6z" fill="#fff" />
          </svg>
        </button>
        <span className="mr-1 ml-[11px] h-full w-px bg-[#6a6a6a]" />
      </div>
    </footer>
  );
}

export default function App() {
  return (
    <div
      lang="zh-CN"
      className="relative flex h-screen flex-col overflow-hidden bg-[#f9f9fb] font-['Noto_Sans','Noto_Sans_CJK_SC',sans-serif] text-[#15141a]"
    >
      <TabStrip />
      <NavBar />
      <BookmarkBar />
      <PdfToolbar />
      <main className="flex min-h-0 flex-1 bg-[#ededf0]">
        <div className="min-w-0 flex-1 overflow-hidden">
          <PdfPage />
        </div>
        <ScrollBar />
      </main>
      <TaskBar />
      <DownloadsPopup />
    </div>
  );
}
